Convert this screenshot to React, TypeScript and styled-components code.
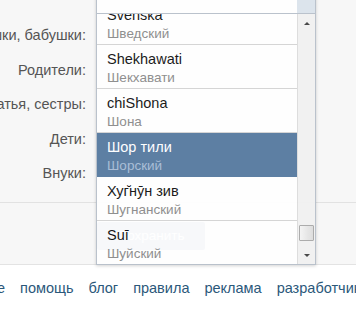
import styled, { createGlobalStyle } from "styled-components";

const GlobalStyle = createGlobalStyle`
    html, body {
        margin: 0;
        padding: 0;
        background: #ffffff;
        font-family: "Liberation Sans", Arial, sans-serif;
    }
`;

const Page = styled.div`
    width: 356px;
    height: 309px;
    overflow: hidden;
    background: #ffffff;
`;

const Panel = styled.div`
    position: relative;
    height: 265px;
    box-sizing: border-box;
    padding-top: 18px;
    background: #f7f7f7;
    border-bottom: 1px solid #e3e3e3;
`;

const Row = styled.div`
    display: grid;
    grid-template-columns: 86px 1fr;
    column-gap: 10px;
    height: 34.5px;
    align-items: center;
`;

const Label = styled.div`
    display: flex;
    justify-content: flex-end;
    white-space: nowrap;
    font-size: 14.5px;
    color: #555555;
`;

const Divider = styled.div`
    margin-top: 11px;
    height: 1px;
    background: #e2e2e2;
`;

const ButtonRow = styled.div`
    display: grid;
    grid-template-columns: 86px 1fr;
    column-gap: 11px;
    margin-top: 19px;
`;

const SaveButton = styled.div`
    grid-column: 2;
    width: 108px;
    height: 28px;
    display: flex;
    align-items: center;
    justify-content: center;
    background: #6283a9;
    color: #ffffff;
    font-size: 13.5px;
    border-radius: 2px;
`;

const Dropdown = styled.div`
    position: absolute;
    left: 96px;
    top: -10px;
    width: 220px;
    box-sizing: border-box;
    border: 1px solid #b7c0ca;
    border-top: none;
    background: #ffffff;
    box-shadow: 0 1px 3px rgba(0, 0, 0, 0.18);
    opacity: 0.95;
`;

const SelectBox = styled.div`
    display: flex;
    height: 24px;
    border-bottom: 1px solid #b7c0ca;
    box-sizing: border-box;
`;

const SelectField = styled.div`
    flex: 1;
    background: #ffffff;
`;

const SelectArrow = styled.div`
    width: 18px;
    background: #dbe3ec;
`;

const Body = styled.div`
    display: flex;
    height: 250px;
`;

const List = styled.div`
    flex: 1;
    overflow: hidden;
`;

const Item = styled.div<{ $selected?: boolean; $first?: boolean }>`
    height: 44px;
    box-sizing: border-box;
    padding: 5px 0 0 10px;
    margin-top: ${(p) => (p.$first ? "-13px" : "0")};
    border-bottom: 1px solid ${(p) => (p.$selected ? "#55799f" : "#d4d4d4")};
    background: ${(p) => (p.$selected ? "#55799f" : "#ffffff")};
`;

const Native = styled.div<{ $selected?: boolean }>`
    font-size: 14.5px;
    line-height: 18px;
    white-space: nowrap;
    color: ${(p) => (p.$selected ? "#ffffff" : "#111111")};
`;

const Russian = styled.div<{ $selected?: boolean }>`
    margin-top: 1px;
    font-size: 13.5px;
    line-height: 18px;
    white-space: nowrap;
    color: ${(p) => (p.$selected ? "#a6bcd6" : "#8a8a8a")};
`;

const Scrollbar = styled.div`
    width: 18px;
    display: flex;
    flex-direction: column;
    background: #f1f1f1;
    border-left: 1px solid #dcdcdc;
    box-sizing: border-box;
`;

const ScrollButton = styled.div`
    height: 18px;
    display: flex;
    align-items: center;
    justify-content: center;
`;

const ArrowUp = styled.div`
    width: 0;
    height: 0;
    border-left: 3px solid transparent;
    border-right: 3px solid transparent;
    border-bottom: 3px solid #404040;
`;

const ArrowDown = styled.div`
    width: 0;
    height: 0;
    border-left: 3px solid transparent;
    border-right: 3px solid transparent;
    border-top: 3px solid #404040;
`;

const Track = styled.div`
    flex: 1;
    display: flex;
    flex-direction: column;
    justify-content: flex-end;
    align-items: center;
    padding-bottom: 5px;
`;

const Thumb = styled.div`
    width: 13px;
    height: 14px;
    border: 1px solid #a9a9a9;
    border-radius: 1px;
    background: linear-gradient(to right, #f4f4f4, #dcdcdc);
`;

const Footer = styled.div`
    display: flex;
    gap: 15px;
    margin-left: -45px;
    padding-top: 14px;
    white-space: nowrap;
`;

const FooterLink = styled.a`
    font-size: 14.5px;
    line-height: 18px;
    color: #2b587a;
    text-decoration: none;
`;

const labels = ["Дедушки, бабушки:", "Родители:", "Братья, сестры:", "Дети:", "Внуки:"];

const languages = [
    { native: "Svenska", russian: "Шведский" },
    { native: "Shekhawati", russian: "Шекхавати" },
    { native: "chiShona", russian: "Шона" },
    { native: "Шор тили", russian: "Шорский", selected: true },
    { native: "Хуг̆нӯн зив", russian: "Шугнанский" },
    { native: "Suī", russian: "Шуйский" },
    { native: "Soomaaliga", russian: "Сомали" },
];

const links = ["о сайте", "помощь", "блог", "правила", "реклама", "разработчикам", "вакансии"];

function App() {
    return (
        <Page>
            <GlobalStyle />
            <Panel>
                {labels.map((label) => (
                    <Row key={label}>
                        <Label>{label}</Label>
                        <div />
                    </Row>
                ))}
                <Divider />
                <ButtonRow>
                    <SaveButton>Сохранить</SaveButton>
                </ButtonRow>
                <Dropdown>
                    <SelectBox>
                        <SelectField />
                        <SelectArrow />
                    </SelectBox>
                    <Body>
                        <List>
                            {languages.map((lang, index) => (
                                <Item key={lang.native} $selected={lang.selected} $first={index === 0}>
                                    <Native $selected={lang.selected}>{lang.native}</Native>
                                    <Russian $selected={lang.selected}>{lang.russian}</Russian>
                                </Item>
                            ))}
                        </List>
                        <Scrollbar>
                            <ScrollButton>
                                <ArrowUp />
                            </ScrollButton>
                            <Track>
                                <Thumb />
                            </Track>
                            <ScrollButton>
                                <ArrowDown />
                            </ScrollButton>
                        </Scrollbar>
                    </Body>
                </Dropdown>
            </Panel>
            <Footer>
                {links.map((link) => (
                    <FooterLink key={link} href="#">
                        {link}
                    </FooterLink>
                ))}
            </Footer>
        </Page>
    );
}

export default App;
